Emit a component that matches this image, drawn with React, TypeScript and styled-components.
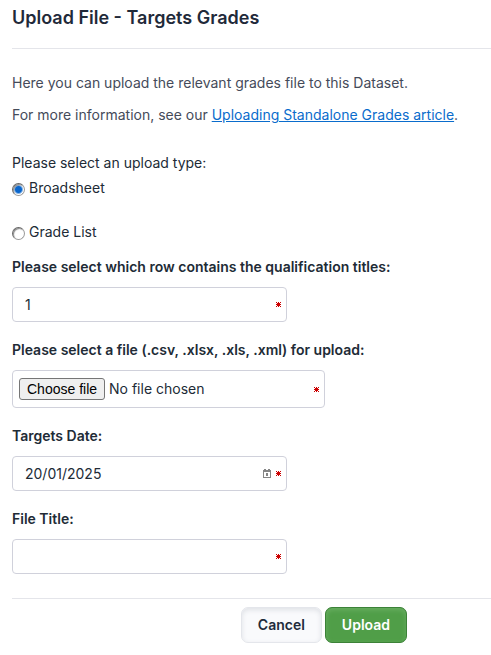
import React, { useState } from "react";
import styled, { createGlobalStyle } from "styled-components";

const GlobalStyle = createGlobalStyle`
  *, *::before, *::after { box-sizing: border-box; }
  body {
    margin: 0;
    background: #fff;
    color: #212b36;
    font: 14px/20px Inter, sans-serif;
  }
`;

const Page = styled.main`
  padding: 6px 0 12px 12px;
`;

const Title = styled.h1`
  margin: 0;
  padding-bottom: 18px;
  border-bottom: 1px solid #e4e5ea;
  font-size: 18px;
  line-height: 24px;
  font-weight: 600;
  color: #1f2a3a;
`;

const Intro = styled.section`
  display: flex;
  flex-direction: column;
  gap: 12px;
  padding: 24px 0 28px;
  color: #454b5a;
`;

const Paragraph = styled.p`
  margin: 0;
`;

const ArticleLink = styled.a`
  color: #0a6ccc;
  text-decoration: underline;
`;

const Form = styled.form`
  display: flex;
  flex-direction: column;
`;

const RadioGroup = styled.fieldset`
  display: flex;
  flex-direction: column;
  align-items: flex-start;
  gap: 24px;
  margin: 0 0 15px;
  padding: 0;
  border: 0;
  min-width: 0;
`;

const Legend = styled.legend`
  margin-bottom: 5px;
  padding: 0;
`;

const RadioLabel = styled.label`
  display: flex;
  align-items: center;
  gap: 4px;
`;

const Radio = styled.input`
  appearance: none;
  width: 13px;
  height: 13px;
  margin: 2px 0 0;
  border: 1px solid;
  border-color: #666 #999 #999 #666;
  border-radius: 50%;
  background: #fff;
  box-shadow: inset 1px 1px 1px #8a8a8a;

  &:checked {
    background: radial-gradient(circle, #0a66cc 3px, #fff 5px);
  }
`;

const Field = styled.div`
  display: flex;
  flex-direction: column;
  align-items: flex-start;
  gap: 10px;
  margin-bottom: 18px;
`;

const FieldLabel = styled.label`
  font-weight: 600;
`;

const ControlBox = styled.div<{ $wide?: boolean }>`
  position: relative;
  display: flex;
  align-items: center;
  gap: 4px;
  width: ${(p) => (p.$wide ? 313 : 275)}px;
  max-width: 100%;
  height: ${(p) => (p.$wide ? 38 : 35)}px;
  padding: 0 5px 0 ${(p) => (p.$wide ? 6 : 12)}px;
  border: 1px solid #d0d1db;
  border-radius: 4px;
  background: #fff;
`;

const TextInput = styled.input`
  flex: 1;
  min-width: 0;
  height: 100%;
  padding: 0;
  border: 0;
  outline: 0;
  background: transparent;
  color: #212b36;
  font: inherit;
`;

const FileInput = styled.input`
  position: absolute;
  inset: 0;
  width: 100%;
  height: 100%;
  opacity: 0;
`;

const ChooseFile = styled.span`
  padding: 0 7px;
  border: 1px solid #767676;
  border-radius: 3px;
  background: #efefef;
  color: #000;
  font: 14px/20px "Liberation Sans", Arial, sans-serif;
`;

const FileName = styled.span`
  flex: 1;
`;

const Actions = styled.div`
  display: flex;
  justify-content: flex-end;
  gap: 3px;
  margin-top: 6px;
  padding: 8px 84px 0 0;
  border-top: 1px solid #e4e5ea;
`;

const Button = styled.button<{ $primary?: boolean }>`
  height: 36px;
  padding: 0 16px;
  border: 1px solid ${(p) => (p.$primary ? "#3c8238" : "#e4e6eb")};
  border-radius: 7px;
  background: ${(p) => (p.$primary ? "#509e48" : "#f9fafc")};
  box-shadow: inset 0 2px 5px ${(p) => (p.$primary ? "#69ae62" : "#dfe1e6")};
  color: ${(p) => (p.$primary ? "#fff" : "#212b3b")};
  font: 600 14px/20px Inter, sans-serif;
`;

const RequiredMark = () => (
  <svg width="5" height="5" viewBox="0 0 5 5" shapeRendering="crispEdges" aria-hidden="true">
    <path fill="#c00" d="M0 0h1v1H0zM2 0h1v1H2zM4 0h1v1H4zM1 1h3v1H1zM0 2h5v1H0zM1 3h3v1H1zM0 4h1v1H0zM2 4h1v1H2zM4 4h1v1H4z" />
  </svg>
);

const CalendarIcon = () => (
  <svg width="9" height="9" viewBox="0 0 9 9" shapeRendering="crispEdges" aria-hidden="true">
    <path fill="#858585" d="M1 0h2v1h2V0h2v1h1v8H0V1h1zM1 3v5h6V3z" fillRule="evenodd" />
    <path fill="#858585" d="M3 4h2v3H3z" />
  </svg>
);

export default function App() {
  const [uploadType, setUploadType] = useState("broadsheet");
  const [fileName, setFileName] = useState("No file chosen");

  return (
    <>
      <GlobalStyle />
      <Page>
        <Title>Upload File - Targets Grades</Title>
        <Intro>
          <Paragraph>Here you can upload the relevant grades file to this Dataset.</Paragraph>
          <Paragraph>
            For more information, see our <ArticleLink href="#article">Uploading Standalone Grades article</ArticleLink>.
          </Paragraph>
        </Intro>
        <Form onSubmit={(e) => e.preventDefault()}>
          <RadioGroup>
            <Legend>Please select an upload type:</Legend>
            <RadioLabel>
              <Radio
                type="radio"
                name="uploadType"
                checked={uploadType === "broadsheet"}
                onChange={() => setUploadType("broadsheet")}
              />
              Broadsheet
            </RadioLabel>
            <RadioLabel>
              <Radio
                type="radio"
                name="uploadType"
                checked={uploadType === "gradelist"}
                onChange={() => setUploadType("gradelist")}
              />
              Grade List
            </RadioLabel>
          </RadioGroup>
          <Field>
            <FieldLabel htmlFor="row">Please select which row contains the qualification titles:</FieldLabel>
            <ControlBox>
              <TextInput id="row" type="text" defaultValue="1" required />
              <RequiredMark />
            </ControlBox>
          </Field>
          <Field>
            <FieldLabel htmlFor="file">Please select a file (.csv, .xlsx, .xls, .xml) for upload:</FieldLabel>
            <ControlBox $wide>
              <ChooseFile>Choose file</ChooseFile>
              <FileName>{fileName}</FileName>
              <RequiredMark />
              <FileInput
                id="file"
                type="file"
                accept=".csv,.xlsx,.xls,.xml"
                onChange={(e) => setFileName(e.target.files?.[0]?.name ?? "No file chosen")}
              />
            </ControlBox>
          </Field>
          <Field>
            <FieldLabel htmlFor="date">Targets Date:</FieldLabel>
            <ControlBox>
              <TextInput id="date" type="text" defaultValue="20/01/2025" required />
              <CalendarIcon />
              <RequiredMark />
            </ControlBox>
          </Field>
          <Field>
            <FieldLabel htmlFor="title">File Title:</FieldLabel>
            <ControlBox>
              <TextInput id="title" type="text" required />
              <RequiredMark />
            </ControlBox>
          </Field>
          <Actions>
            <Button type="button">Cancel</Button>
            <Button type="submit" $primary>Upload</Button>
          </Actions>
        </Form>
      </Page>
    </>
  );
}
